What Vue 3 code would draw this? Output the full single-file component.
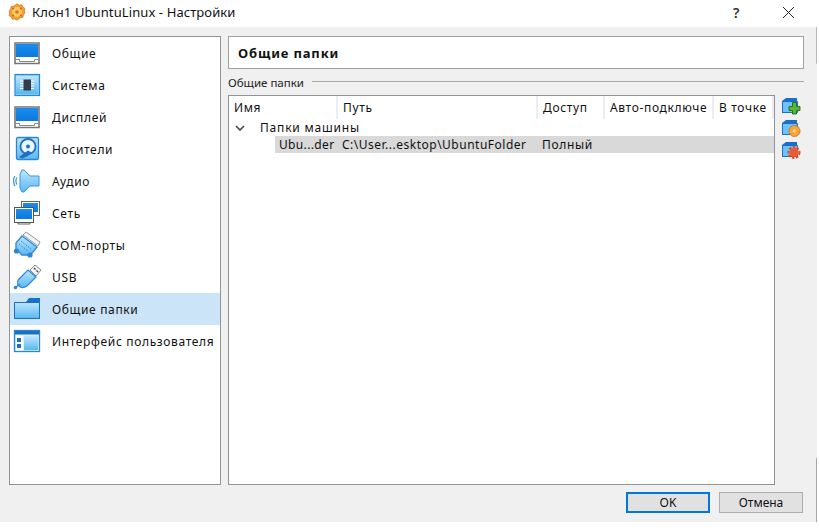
<script setup>
const sections = [
  { key: "general", label: "Общие" },
  { key: "system", label: "Система" },
  { key: "display", label: "Дисплей" },
  { key: "storage", label: "Носители" },
  { key: "audio", label: "Аудио" },
  { key: "network", label: "Сеть" },
  { key: "com", label: "COM-порты" },
  { key: "usb", label: "USB" },
  { key: "folders", label: "Общие папки", active: true },
  { key: "ui", label: "Интерфейс пользователя" },
];

const columns = ["Имя", "Путь", "Доступ", "Авто-подключе", "В точке"];
</script>

<template>
  <div class="window">
    <header class="titlebar">
      <svg class="app-icon" width="18" height="18" viewBox="0 0 18 18">
        <path d="M9 .8l2.200 1.400 2.500-.4 1 2.200 2.200 1.400-.6 2.500.6 2.200-1.600 1.900-.4 2.500-2.500.2L9 17.200l-2.200-1.300-2.500.3-1-2.200-2.200-1.300.5-2.600-.5-2.200 1.600-1.900.4-2.500 2.500-.2z" fill="#f6a02e" stroke="#c8702a" stroke-width=".7" />
        <circle cx="9" cy="9" r="5" fill="#fbc95e" />
        <circle cx="9" cy="9" r="1.800" fill="#e0702c" />
        <circle cx="5" cy="5.500" r="1" fill="#d8562c" />
        <circle cx="13" cy="5.500" r="1" fill="#d8562c" />
        <circle cx="5" cy="12.500" r="1" fill="#d8562c" />
        <circle cx="13" cy="12.500" r="1" fill="#d8562c" />
      </svg>
      <span class="title-text">Клон1 UbuntuLinux - Настройки</span>
      <span class="help">?</span>
      <svg class="close" width="13" height="13" viewBox="0 0 13 13">
        <path d="M1 1l11 11M12 1L1 12" stroke="#222" stroke-width="1" fill="none" />
      </svg>
    </header>

    <div class="body">
      <div class="content">
        <nav class="sidebar">
          <div v-for="s in sections" :key="s.key" class="nav-row" :class="{ active: s.active }">
            <svg class="nav-icon" width="28" height="28" viewBox="0 0 28 28">
              <defs>
                <linearGradient :id="'blue-' + s.key" x1="0" y1="0" x2="0" y2="1">
                  <stop offset="0" stop-color="#1b8df0" />
                  <stop offset="1" stop-color="#0a78dc" />
                </linearGradient>
                <linearGradient :id="'pale-' + s.key" x1="0" y1="0" x2="0" y2="1">
                  <stop offset="0" stop-color="#bfe6fd" />
                  <stop offset="1" stop-color="#58b8f2" />
                </linearGradient>
              </defs>
              <g v-if="s.key === 'general' || s.key === 'display'">
                <path d="M2 4h24v20.500H2z" fill="#fff" stroke="#777" stroke-width="1.600" />
                <rect x="3" y="5" width="22" height="13" :fill="`url(#blue-${s.key})`" />
                <path d="M2.500 20.500H6.500v2h15v-2h4" fill="none" stroke="#8a8a8a" stroke-width="1" />
              </g>
              <g v-else-if="s.key === 'system'">
                <rect x="2" y="3.500" width="24.500" height="21" fill="#8ed2fa" stroke="#2b85d8" stroke-width="1.200" />
                <rect x="3" y="5" width="22" height="18" :fill="`url(#pale-${s.key})`" />
                <path d="M7 10h14M7 12.500h14M7 15h14M7 17.500h14" stroke="#fff" stroke-width="1" />
                <rect x="10.500" y="8.500" width="7.500" height="11" fill="#333a48" />
              </g>
              <g v-else-if="s.key === 'storage'">
                <rect x="3.500" y="2.500" width="22" height="22" rx="1.500" :fill="`url(#pale-${s.key})`" stroke="#2b85d8" stroke-width="1.300" />
                <circle cx="15" cy="11.500" r="7.500" fill="#e8f6ff" stroke="#1f6fc0" stroke-width="1.800" />
                <circle cx="15" cy="11.500" r="2" fill="#1f6fc0" />
                <path d="M6 22l9-6.500 3.500 2-3.500 3.500-6 2.500z" fill="#1f6fc0" />
              </g>
              <g v-else-if="s.key === 'audio'">
                <path d="M7 7l2-4h2l6 6h9v10h-9l-6 6H9l-2-4z" :fill="`url(#pale-${s.key})`" stroke="#3a95de" stroke-width="1" />
                <path d="M3.800 10.500q-1.800 3.500 0 7M1.800 9q-2.500 5 0 10" fill="none" stroke="#3a95de" stroke-width="1.200" />
              </g>
              <g v-else-if="s.key === 'network'">
                <rect x="8.500" y="2.500" width="18" height="14" fill="#fff" stroke="#666" />
                <rect x="10" y="4" width="15" height="9" :fill="`url(#blue-${s.key})`" />
                <rect x="1.500" y="8.500" width="19" height="15" fill="#fff" stroke="#555" />
                <rect x="3" y="10" width="16" height="10" :fill="`url(#blue-${s.key})`" />
                <path d="M5 23.500v1.500h12v-1.500" fill="none" stroke="#666" />
              </g>
              <g v-else-if="s.key === 'com'">
                <path d="M9 5l15 11-4 5-3 3H9l-6-6V12z" :fill="`url(#pale-${s.key})`" stroke="#2f86d6" stroke-width="1.300" />
                <path d="M10 4l3-3 14 10-2 4z" fill="#f2f4f6" stroke="#8d99a6" stroke-width="1" />
                <path d="M8 10l10 8M6 13l9 7" stroke="#2f86d6" stroke-width="1" stroke-dasharray="1.500 1.500" />
                <circle cx="3.500" cy="20" r="2.600" fill="#2f86d6" />
                <circle cx="17" cy="24" r="2.600" fill="#2f86d6" />
              </g>
              <g v-else-if="s.key === 'usb'">
                <path d="M17 7l5-5 6 5-5 6z" fill="#f2f4f6" stroke="#7f8b96" stroke-width="1" />
                <path d="M21 5l1.500 1.500M23.500 7.500l1.500 1.500" stroke="#444" stroke-width="1.300" />
                <path d="M15 7l8 7-9 9c-3 2-6 2-8 0s-2-5 0-7z" :fill="`url(#pale-${s.key})`" stroke="#2f86d6" stroke-width="1.200" />
                <path d="M7 21l-4 3" stroke="#2f86d6" stroke-width="1.500" />
                <circle cx="2.500" cy="24.500" r="1.800" fill="#2f86d6" />
              </g>
              <g v-else-if="s.key === 'folders'">
                <path d="M13 7l3-4h11v21H1V7z" fill="#1c6fc6" />
                <path d="M1.500 7.500h25v16h-25z" :fill="`url(#pale-${s.key})`" stroke="#1c6fc6" />
              </g>
              <g v-else>
                <rect x="1.500" y="3.500" width="25" height="21" fill="#d8f0fd" stroke="#2b85d8" stroke-width="1.300" />
                <rect x="2" y="4" width="24" height="3.500" fill="#1c6fc6" />
                <rect x="3" y="8.500" width="7" height="15" fill="#fff" />
                <rect x="4" y="11" width="4" height="4" fill="#1c6fc6" />
                <rect x="4" y="17" width="4" height="4" fill="#1c6fc6" />
                <rect x="11" y="9" width="14" height="14" :fill="`url(#pale-${s.key})`" />
              </g>
            </svg>
            <span class="nav-label">{{ s.label }}</span>
          </div>
        </nav>

        <main class="panel">
          <div class="panel-title">Общие папки</div>
          <div class="group-label">
            <span>Общие папки</span>
            <i class="group-line"></i>
          </div>
          <div class="group-body">
            <div class="table">
              <div class="thead">
                <div v-for="c in columns" :key="c" class="th">{{ c }}</div>
              </div>
              <div class="tree-head">
                <svg width="10" height="6" viewBox="0 0 10 6">
                  <path d="M1 1l4 4 4-4" fill="none" stroke="#444" stroke-width="1.600" />
                </svg>
                <span>Папки машины</span>
              </div>
              <div class="tree-row">
                <span class="cell-name">Ubu...der</span>
                <span class="cell-path">C:\User...esktop\UbuntuFolder</span>
                <span>Полный</span>
              </div>
            </div>
            <div class="tools">
              <svg v-for="t in ['add', 'edit', 'remove']" :key="t" width="20" height="18" viewBox="0 0 20 18">
                <path d="M1 4l4-3h11v15H1z" fill="#1c6fc6" />
                <path d="M1.500 4.500h15v11h-15z" fill="#6fc2f5" stroke="#1c6fc6" />
                <path v-if="t === 'add'" d="M11.500 5.500h4v4H19v4h-3.500V17h-4v-3.500H8v-4h3.500z" fill="#5cb531" stroke="#1f6d14" stroke-width=".9" />
                <g v-else-if="t === 'edit'">
                  <circle cx="13.500" cy="12" r="5.500" fill="#f7a63a" stroke="#c8651c" stroke-width="1" stroke-dasharray="2 .6" />
                  <circle cx="13.500" cy="12" r="1.800" fill="#fbd27a" />
                </g>
                <g v-else>
                  <circle cx="13" cy="11.500" r="4.500" fill="#ee5a30" />
                  <circle cx="13" cy="11.500" r="5.500" fill="none" stroke="#dd4a22" stroke-width="2" stroke-dasharray="2.500 1.500" />
                </g>
              </svg>
            </div>
          </div>
        </main>
      </div>
      <footer class="actions">
        <button type="button" class="btn is-default">OK</button>
        <button type="button" class="btn">Отмена</button>
      </footer>
    </div>
  </div>
</template>

<style scoped>
.window {
  width: 819px;
  height: 528px;
  background: #fff;
  overflow: hidden;
  font-family: "Noto Sans", "Open Sans", sans-serif;
  font-size: 12px;
  letter-spacing: 0.65px;
  color: #111;
}

.titlebar {
  display: flex;
  align-items: center;
  height: 27px;
  padding: 0 24px 3px 8px;
  box-sizing: border-box;
}

.app-icon {
  margin-right: 6px;
}

.title-text {
  flex: 1;
  font-size: 13px;
  letter-spacing: 0.1px;
}

.help {
  margin-right: 47px;
  font-size: 14px;
  font-weight: 600;
  color: #333;
  transform: translateX(5px);
}

.body {
  position: relative;
  width: 816px;
  height: 495px;
  padding: 9px 12px 9px 9px;
  box-sizing: border-box;
  background: #f0f0f0;
  display: flex;
  flex-direction: column;
}

/* обрезанный край окна справа */
.body::after {
  content: "";
  position: absolute;
  top: 0;
  right: -1px;
  bottom: 0;
  width: 1px;
  background: linear-gradient(#b8b8b8 0, #b8b8b8 36px, #f0f0f0 37px, #f0f0f0 430px, #a8a8a8 432px);
}

.content {
  display: flex;
  gap: 7px;
  height: 451px;
}

.sidebar {
  width: 212px;
  box-sizing: border-box;
  border: 1px solid #8f9499;
  background: #fff;
  flex: none;
}

.nav-row {
  display: flex;
  align-items: center;
  height: 32px;
  padding-left: 3px;
}

.nav-row.active {
  background: #cce4f8;
}

.nav-icon {
  flex: none;
}

.nav-label {
  margin-left: 11px;
  white-space: nowrap;
}

.panel {
  flex: 1;
  min-width: 0;
  display: flex;
  flex-direction: column;
}

.panel-title {
  height: 33px;
  box-sizing: border-box;
  border: 1px solid #a0a0a0;
  background: #fff;
  padding-left: 9px;
  display: flex;
  align-items: center;
  font-size: 13px;
  font-weight: 700;
  letter-spacing: 0.85px;
}

.group-label {
  display: flex;
  align-items: center;
  margin-top: 5px;
  height: 16px;
  color: #222;
  font-size: 11.5px;
  letter-spacing: 0;
}

.group-line {
  flex: 1;
  height: 1px;
  margin: 0 0 2px 8px;
  background: #a8a8a8;
}

.group-body {
  flex: 1;
  display: flex;
  gap: 6px;
  margin-top: 5px;
  min-height: 0;
}

.table {
  width: 547px;
  box-sizing: border-box;
  border: 1px solid #8f9499;
  background: #fff;
  flex: none;
}

.thead {
  display: grid;
  grid-template-columns: 109px 200px 67px 109px 60px;
  height: 23px;
}

.th {
  padding-left: 5px;
  line-height: 23px;
  white-space: nowrap;
  border-right: 2px solid #eceff1;
}

.tree-head {
  display: flex;
  align-items: center;
  height: 17px;
  padding-left: 6px;
}

.tree-head span {
  margin-left: 15px;
  letter-spacing: 0.8px;
}

.tree-row {
  display: grid;
  grid-template-columns: 63px 200px 1fr;
  height: 17px;
  line-height: 17px;
  margin-left: 46px;
  padding-left: 4px;
  background: #d9d9d9;
}

.tree-row span {
  white-space: nowrap;
}

.cell-name {
  letter-spacing: 0.35px;
}

.cell-path {
  letter-spacing: 0.5px;
}

.tools {
  display: flex;
  flex-direction: column;
  gap: 4px;
  padding-top: 2px;
}

.actions {
  display: flex;
  justify-content: flex-end;
  gap: 9px;
  margin-top: 7px;
  padding-right: 1px;
}

.btn {
  width: 84px;
  height: 21px;
  padding: 0;
  box-sizing: border-box;
  border: 1px solid #adadad;
  background: #e1e1e1;
  font: inherit;
  letter-spacing: 0;
  color: #111;
}

.btn.is-default {
  border: 2px solid #0078d7;
}
</style>

<style>
html,
body {
  margin: 0;
  background: #fff;
}
</style>
